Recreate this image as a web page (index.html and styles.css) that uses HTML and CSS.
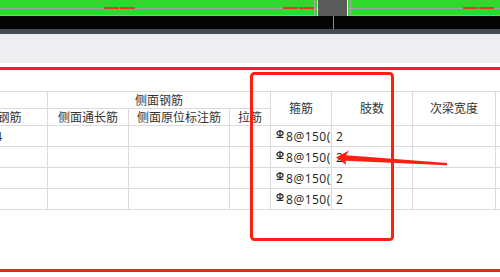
FILE: index.html
```html
<!DOCTYPE html>
<html lang="zh-CN">
<head>
    <meta charset="UTF-8">
    <meta name="viewport" content="width=device-width, initial-scale=1.0">
    <title>次梁加筋</title>
    <link rel="stylesheet" href="styles.css">
</head>
<body>
    <!-- timeline strip with section marks and the drag handle -->
    <div class="timeline">
        <div class="pair first"><span class="mark"></span><span class="mark"></span></div>
        <div class="pair second"><span class="mark"></span><span class="mark"></span></div>
        <div class="handle"><div class="knob"></div></div>
        <div class="pair third"><span class="mark"></span><span class="mark"></span></div>
    </div>
    <div class="ruler"><span class="playhead"></span></div>
    <div class="status"></div>
    <div class="toolbar"></div>

    <div class="panel">
        <table class="grid">
            <colgroup>
                <col class="c-main">
                <col class="c-long">
                <col class="c-side">
                <col class="c-tie">
                <col class="c-stir">
                <col class="c-legs">
                <col class="c-width">
                <col class="c-more">
            </colgroup>
            <thead>
                <tr class="head-top">
                    <th></th>
                    <th colspan="3">侧面钢筋</th>
                    <th rowspan="2">箍筋</th>
                    <th rowspan="2">肢数</th>
                    <th rowspan="2">次梁宽度</th>
                    <th rowspan="2"></th>
                </tr>
                <tr class="head-sub">
                    <th>钢筋</th>
                    <th>侧面通长筋</th>
                    <th>侧面原位标注筋</th>
                    <th>拉筋</th>
                </tr>
            </thead>
            <tbody>
                <tr>
                    <td class="main">2C14</td>
                    <td></td><td></td><td></td>
                    <td class="stir"><svg class="rebar" viewBox="0 0 8 8"><ellipse cx="4" cy="3.3" rx="3.1" ry="2.2"/><line x1="4" y1="0" x2="4" y2="7.4"/><line x1="0.6" y1="7.4" x2="7.4" y2="7.4"/></svg>8@150(2)</td>
                    <td>2</td><td></td><td></td>
                </tr>
                <tr>
                    <td></td><td></td><td></td><td></td>
                    <td class="stir"><svg class="rebar" viewBox="0 0 8 8"><ellipse cx="4" cy="3.3" rx="3.1" ry="2.2"/><line x1="4" y1="0" x2="4" y2="7.4"/><line x1="0.6" y1="7.4" x2="7.4" y2="7.4"/></svg>8@150(2)</td>
                    <td>2</td><td></td><td></td>
                </tr>
                <tr>
                    <td></td><td></td><td></td><td></td>
                    <td class="stir"><svg class="rebar" viewBox="0 0 8 8"><ellipse cx="4" cy="3.3" rx="3.1" ry="2.2"/><line x1="4" y1="0" x2="4" y2="7.4"/><line x1="0.6" y1="7.4" x2="7.4" y2="7.4"/></svg>8@150(2)</td>
                    <td>2</td><td></td><td></td>
                </tr>
                <tr>
                    <td></td><td></td><td></td><td></td>
                    <td class="stir"><svg class="rebar" viewBox="0 0 8 8"><ellipse cx="4" cy="3.3" rx="3.1" ry="2.2"/><line x1="4" y1="0" x2="4" y2="7.4"/><line x1="0.6" y1="7.4" x2="7.4" y2="7.4"/></svg>8@150(2)</td>
                    <td>2</td><td></td><td></td>
                </tr>
            </tbody>
        </table>
    </div>

    <!-- markup layer: frame around stirrup columns and pointer arrow -->
    <svg class="markup" viewBox="0 0 500 277">
        <rect x="251.5" y="73.5" width="141" height="166" rx="3"/>
        <polygon points="336,157.5 349,150.5 346,155.3 447,163 447,165.2 345.5,160.7 346,164.8"/>
    </svg>
</body>
</html>
```

FILE: styles.css
```css
body {
    margin: 0;
    width: 500px;
    height: 277px;
    overflow: hidden;
    position: relative;
    background-color: #fff;
    font-family: "Open Sans", "Noto Sans CJK SC", sans-serif;
}

/* timeline */
.timeline {
    display: flex;
    align-items: flex-start;
    height: 16px;
    box-sizing: border-box;
    border-bottom: 1px solid #3ae0b4;
    background-color: #2cd92c;
    background-image: linear-gradient(#a2a2a2, #a2a2a2);
    background-size: 100% 1px;
    background-position: 0 8px;
    background-repeat: no-repeat;
}

.pair {
    display: flex;
    gap: 1px;
    margin-top: 7px;
}

.pair.first {
    margin-left: 104px;
}

.pair.second {
    margin-left: 148px;
}

.pair.third {
    margin-left: 112px;
}

.mark {
    width: 15px;
    height: 2px;
    background-color: #f2361c;
}

.handle {
    display: flex;
    width: 37px;
    height: 16px;
    box-sizing: border-box;
    padding: 0 2px;
    border-left: 1px solid #a8a8a8;
    border-right: 1px solid #a8a8a8;
}

.knob {
    flex: 1;
    background-color: #5b5b5b;
    border-left: 1px solid #ececec;
    border-right: 1px solid #ececec;
}

.ruler {
    display: flex;
    height: 13px;
    background-color: #040404;
}

.playhead {
    width: 1px;
    margin-left: 333px;
    background-color: #8e8e8e;
}

.status {
    height: 5px;
    background-color: #444b52;
}

.toolbar {
    height: 29px;
    background-color: #eeeef1;
}

/* table panel */
.panel {
    margin-top: 4px;
    height: 205px;
    box-sizing: border-box;
    padding-top: 21px;
    border-top: 3px solid #ff1e12;
    border-bottom: 3px solid #ff1e12;
}

.grid {
    border-collapse: collapse;
    table-layout: fixed;
    width: 604px;
    margin-left: -29px;
    font-size: 12px;
    line-height: 15px;
    color: #333;
}

.grid th, .grid td {
    border: 1px solid #dbdbdb;
    padding: 0 4px;
    white-space: nowrap;
    overflow: hidden;
}

.grid th {
    font-weight: normal;
    text-align: center;
}

.grid td {
    color: #222;
    text-align: left;
    padding-top: 1px;
}

.grid td.main {
    padding-left: 2px;
}

.grid td.stir {
    letter-spacing: 0.5px;
}

.head-top {
    height: 17px;
}

.head-sub {
    height: 17px;
}

.grid tbody tr {
    height: 21px;
}

.c-main { width: 76px; }
.c-long { width: 81px; }
.c-side { width: 101px; }
.c-tie { width: 41px; }
.c-stir { width: 61px; }
.c-legs { width: 81px; }
.c-width { width: 83px; }
.c-more { width: 80px; }

.rebar {
    width: 8px;
    height: 8px;
    vertical-align: 3px;
    margin-left: 1px;
    margin-right: 2px;
    fill: none;
    stroke: #2a2a2a;
    stroke-width: 1.2;
}

/* markup layer */
.markup {
    position: absolute;
    top: 0;
    left: 0;
    width: 500px;
    height: 277px;
    pointer-events: none;
}

.markup rect {
    fill: none;
    stroke: #ff1e12;
    stroke-width: 3;
}

.markup polygon {
    fill: #ff1e12;
}
```
